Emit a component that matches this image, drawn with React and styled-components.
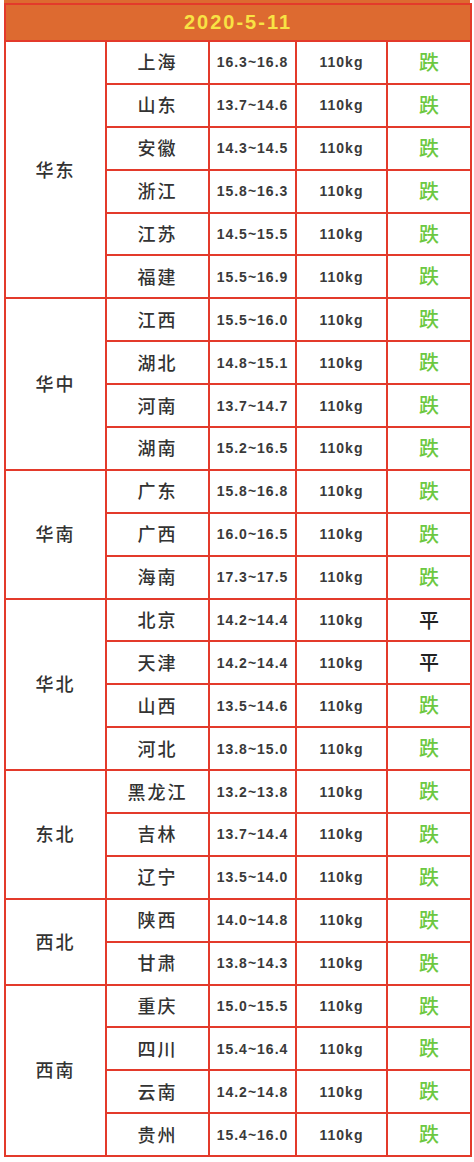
import React from 'react';
import styled, { createGlobalStyle } from 'styled-components';

const GlobalStyle = createGlobalStyle`
  html, body {
    margin: 0;
    padding: 0;
    background: #ffffff;
  }
  body {
    font-family: "Liberation Sans", "Noto Sans CJK SC", sans-serif;
  }
`

const Page = styled.div`
  width: 474px;
  padding: 0 4px 0 4px;
  box-sizing: border-box;
`

const TopStrip = styled.div`
  height: 3px;
  background-color: #dd6a30;
`

const PriceTable = styled.table`
  width: 466px;
  border-collapse: collapse;
  table-layout: fixed;
`

const HeaderCell = styled.th`
  height: 35px;
  padding: 0;
  background-color: #dd6a30;
  border: 2px solid #e33a2b;
  color: #f8e244;
  font-size: 20px;
  font-weight: 700;
  letter-spacing: 2px;
  text-align: center;
`

const Row = styled.tr`
  height: 42.9px;
`

const Cell = styled.td`
  padding: 0 0 2px 0;
  border: 2px solid #e33a2b;
  text-align: center;
  vertical-align: middle;
  color: #333333;
  font-family: "Noto Sans CJK SC", sans-serif;
  font-size: 18px;
  font-weight: 500;
  letter-spacing: 2px;
`

const NumCell = styled(Cell)`
  padding: 0;
  font-family: "Liberation Sans", "Noto Sans CJK SC", sans-serif;
  font-size: 14px;
  font-weight: 700;
  letter-spacing: 1px;
  color: #3a3a3a;
`

const TrendCell = styled(Cell)`
  font-size: 20px;
  letter-spacing: 0;
  color: ${p => (p.$flat ? '#222222' : '#6cc841')};
`

const groups = [
  { region: '华东', rows: [
    ['上海', '16.3~16.8', '跌'],
    ['山东', '13.7~14.6', '跌'],
    ['安徽', '14.3~14.5', '跌'],
    ['浙江', '15.8~16.3', '跌'],
    ['江苏', '14.5~15.5', '跌'],
    ['福建', '15.5~16.9', '跌'],
  ] },
  { region: '华中', rows: [
    ['江西', '15.5~16.0', '跌'],
    ['湖北', '14.8~15.1', '跌'],
    ['河南', '13.7~14.7', '跌'],
    ['湖南', '15.2~16.5', '跌'],
  ] },
  { region: '华南', rows: [
    ['广东', '15.8~16.8', '跌'],
    ['广西', '16.0~16.5', '跌'],
    ['海南', '17.3~17.5', '跌'],
  ] },
  { region: '华北', rows: [
    ['北京', '14.2~14.4', '平'],
    ['天津', '14.2~14.4', '平'],
    ['山西', '13.5~14.6', '跌'],
    ['河北', '13.8~15.0', '跌'],
  ] },
  { region: '东北', rows: [
    ['黑龙江', '13.2~13.8', '跌'],
    ['吉林', '13.7~14.4', '跌'],
    ['辽宁', '13.5~14.0', '跌'],
  ] },
  { region: '西北', rows: [
    ['陕西', '14.0~14.8', '跌'],
    ['甘肃', '13.8~14.3', '跌'],
  ] },
  { region: '西南', rows: [
    ['重庆', '15.0~15.5', '跌'],
    ['四川', '15.4~16.4', '跌'],
    ['云南', '14.2~14.8', '跌'],
    ['贵州', '15.4~16.0', '跌'],
  ] },
];

const App = () => {
  return (
    <Page>
      <GlobalStyle />
      <TopStrip />
      <PriceTable>
        <colgroup>
          <col style={{ width: 101 }} />
          <col style={{ width: 103 }} />
          <col style={{ width: 87 }} />
          <col style={{ width: 91 }} />
          <col style={{ width: 84 }} />
        </colgroup>
        <thead>
          <tr>
            <HeaderCell colSpan={5}>2020-5-11</HeaderCell>
          </tr>
        </thead>
        <tbody>
          {groups.map(g =>
            g.rows.map(([city, price, trend], i) => (
              <Row key={city}>
                {i === 0 && <Cell rowSpan={g.rows.length}>{g.region}</Cell>}
                <Cell>{city}</Cell>
                <NumCell>{price}</NumCell>
                <NumCell>110kg</NumCell>
                <TrendCell $flat={trend === '平'}>{trend}</TrendCell>
              </Row>
            ))
          )}
        </tbody>
      </PriceTable>
    </Page>
  )
}

export default App;
